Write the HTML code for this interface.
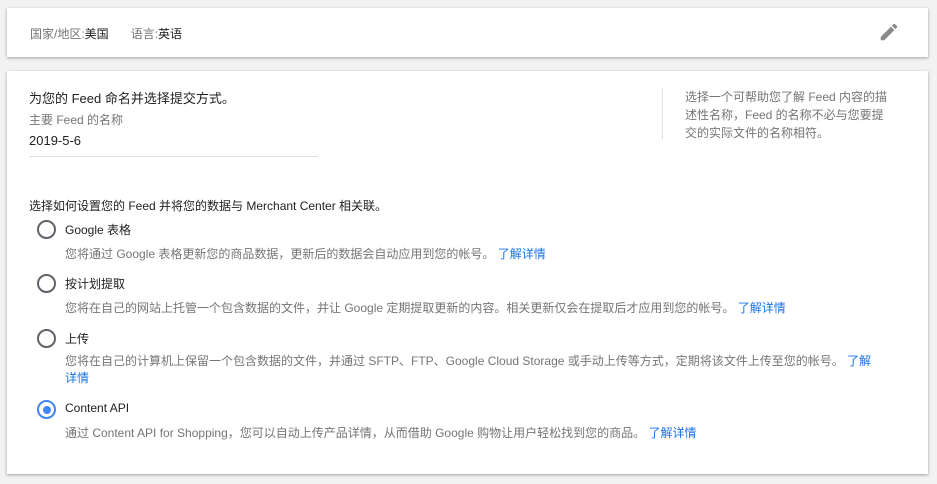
<!DOCTYPE html>
<html><head><meta charset="utf-8"><style>
body{margin:0;background:#f2f2f2;font-family:"Liberation Sans","Noto Sans CJK SC",sans-serif;width:937px;height:484px;overflow:hidden;position:relative}
.card{position:absolute;background:#fff;box-shadow:0 1px 3px rgba(0,0,0,.35)}
.t{position:absolute;white-space:nowrap}
.g{color:#757575}
.d{color:#212121}
a{color:#1a73e8;text-decoration:none}
.r{position:absolute;left:37px;width:15px;height:15px;border:2px solid #5f6368;border-radius:50%;box-sizing:content-box}
.r.on{border-color:#4285f4}
.r.on::after{content:"";position:absolute;left:3.5px;top:3.5px;width:8px;height:8px;border-radius:50%;background:#4285f4}
</style></head><body>
<div class="card" style="left:7px;top:8px;width:921px;height:49px"></div>
<div class="t g" style="left:30px;top:25px;font-size:12px">国家/地区:<span class="d">美国</span><span style="display:inline-block;width:22px"></span>语言:<span class="d">英语</span></div>
<svg style="position:absolute;left:878px;top:21px" width="22" height="22" viewBox="0 0 24 24"><path fill="#8a8a8a" d="M3 17.25V21h3.75L17.81 9.94l-3.75-3.75L3 17.25zM20.71 7.04a1 1 0 0 0 0-1.41l-2.34-2.34a1 1 0 0 0-1.41 0l-1.83 1.83 3.75 3.75 1.83-1.83z"/></svg>
<div class="card" style="left:7px;top:71px;width:921px;height:403px"></div>
<div class="t d" style="left:29px;top:88px;font-size:13px">为您的 Feed 命名并选择提交方式。</div>
<div class="t g" style="left:29px;top:111px;font-size:12px">主要 Feed 的名称</div>
<div class="t d" style="left:29px;top:133px;font-size:13px">2019-5-6</div>
<div style="position:absolute;left:29px;top:156px;width:289px;height:1px;background:#e0e0e0"></div>
<div style="position:absolute;left:662px;top:88px;width:1px;height:51px;background:#e0e0e0"></div>
<div class="t g" style="left:685px;top:88px;font-size:12px;line-height:18px;white-space:normal;width:210px">选择一个可帮助您了解 Feed 内容的描述性名称，Feed 的名称不必与您要提交的实际文件的名称相符。</div>
<div class="t d" style="left:29px;top:197px;font-size:12px">选择如何设置您的 Feed 并将您的数据与 Merchant Center 相关联。</div>
<div class="r" style="top:220px"></div>
<div class="t d" style="left:65px;top:221px;font-size:12px">Google 表格</div>
<div class="t g" style="left:65px;top:245px;font-size:12px">您将通过 Google 表格更新您的商品数据，更新后的数据会自动应用到您的帐号。 <a>了解详情</a></div>
<div class="r" style="top:274px"></div>
<div class="t d" style="left:65px;top:275px;font-size:12px">按计划提取</div>
<div class="t g" style="left:65px;top:299px;font-size:12px">您将在自己的网站上托管一个包含数据的文件，并让 Google 定期提取更新的内容。相关更新仅会在提取后才应用到您的帐号。 <a>了解详情</a></div>
<div class="r" style="top:329px"></div>
<div class="t d" style="left:65px;top:330px;font-size:12px">上传</div>
<div class="t g" style="left:65px;top:353px;font-size:12px;line-height:17px;white-space:normal;width:815px">您将在自己的计算机上保留一个包含数据的文件，并通过 SFTP、FTP、Google Cloud Storage 或手动上传等方式，定期将该文件上传至您的帐号。 <a>了解详情</a></div>
<div class="r on" style="top:400px"></div>
<div class="t d" style="left:65px;top:401px;font-size:12px">Content API</div>
<div class="t g" style="left:65px;top:424px;font-size:12px">通过 Content API for Shopping，您可以自动上传产品详情，从而借助 Google 购物让用户轻松找到您的商品。 <a>了解详情</a></div>
</body></html>
